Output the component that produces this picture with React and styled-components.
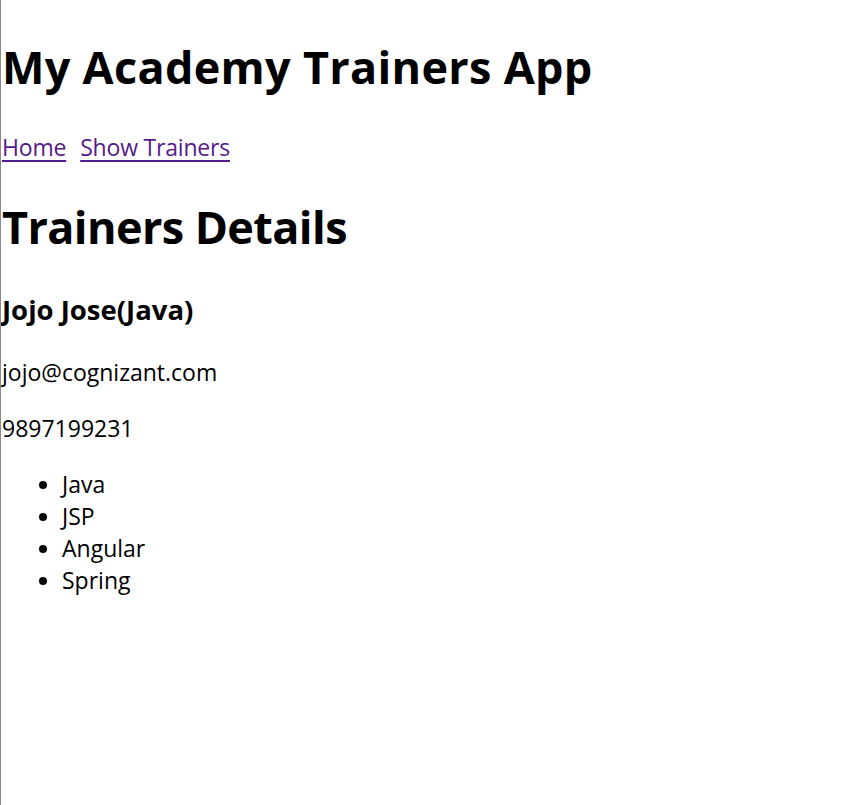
import React from 'react';
import styled, { createGlobalStyle } from 'styled-components';

const GlobalStyle = createGlobalStyle`
  html, body {
    margin: 0;
    padding: 0;
    background: #ffffff;
  }
  body {
    font-family: 'Open Sans', 'Noto Sans', sans-serif;
    font-size: 23px;
    line-height: 32px;
    color: #000000;
  }
`;

const Page = styled.div`
  min-height: 805px;
  box-sizing: border-box;
  border-left: 1px solid #8a8a8a;
  padding: 3px 0 0 1px;
  overflow: hidden;
`;

const Title = styled.h1`
  font-size: 45px;
  line-height: 64px;
  font-weight: 700;
  margin: 32px 0;
  letter-spacing: ${(p) => (p.$tight ? '-0.6px' : '0.3px')};
`;

const Nav = styled.div`
  display: flex;
  gap: 14px;
`;

const NavLink = styled.a`
  color: #551a8b;
  text-decoration: underline;
  text-underline-offset: 4px;
  cursor: pointer;
  letter-spacing: -0.2px;
`;

const TrainerName = styled.h3`
  font-size: 27.5px;
  line-height: 37px;
  font-weight: 700;
  margin: 28px 0;
`;

const Detail = styled.p`
  margin: 24px 0;
`;

const SkillList = styled.ul`
  margin: 24px 0;
  padding-left: 60px;
`;

const Skill = styled.li`
  list-style: disc;
`;

const trainer = {
  name: 'Jojo Jose',
  technology: 'Java',
  email: 'jojo@cognizant.com',
  phone: '9897199231',
  skills: ['Java', 'JSP', 'Angular', 'Spring'],
};

export default function App() {
  return (
    <>
      <GlobalStyle />
      <Page>
        <Title>My Academy Trainers App</Title>
        <Nav>
          <NavLink href="#/">Home</NavLink>
          <NavLink href="#/trainers">Show Trainers</NavLink>
        </Nav>
        <Title $tight>Trainers Details</Title>
        <TrainerName>
          {trainer.name}({trainer.technology})
        </TrainerName>
        <Detail>{trainer.email}</Detail>
        <Detail>{trainer.phone}</Detail>
        <SkillList>
          {trainer.skills.map((skill) => (
            <Skill key={skill}>{skill}</Skill>
          ))}
        </SkillList>
      </Page>
    </>
  );
}
